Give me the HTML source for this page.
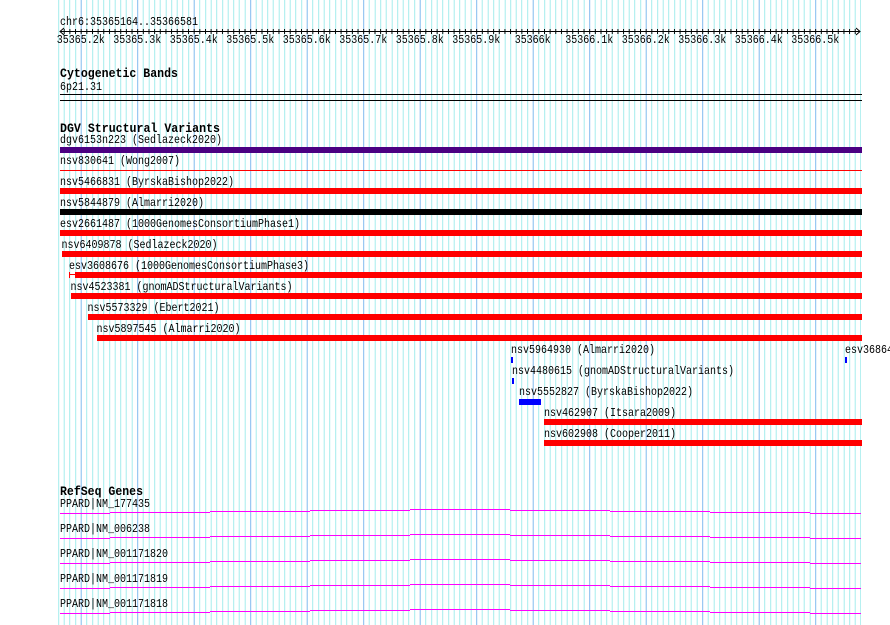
<!DOCTYPE html>
<html><head><meta charset="utf-8"><style>
html,body{margin:0;padding:0;background:#fff;}
svg{display:block}
text{font-family:"Liberation Mono",monospace;font-size:12px;fill:#000}
.b{font-weight:bold;font-size:13px}
</style></head><body>
<svg width="890" height="625" viewBox="0 0 890 625" xmlns="http://www.w3.org/2000/svg">
<defs>
<pattern id="g" x="24.2" y="0" width="56.5" height="625" patternUnits="userSpaceOnUse">
<g shape-rendering="crispEdges">
<rect x="0" y="0" width="1" height="625" fill="#80bbee"/>
<rect x="5.65" y="0" width="1" height="625" fill="#a4ecec"/>
<rect x="11.3" y="0" width="1" height="625" fill="#a4ecec"/>
<rect x="16.95" y="0" width="1" height="625" fill="#a4ecec"/>
<rect x="22.6" y="0" width="1" height="625" fill="#a4ecec"/>
<rect x="28.25" y="0" width="1" height="625" fill="#a4ecec"/>
<rect x="33.9" y="0" width="1" height="625" fill="#a4ecec"/>
<rect x="39.55" y="0" width="1" height="625" fill="#a4ecec"/>
<rect x="45.2" y="0" width="1" height="625" fill="#a4ecec"/>
<rect x="50.85" y="0" width="1" height="625" fill="#a4ecec"/>
</g>
</pattern>
<pattern id="t" x="24.2" y="0" width="5.65" height="10" patternUnits="userSpaceOnUse">
<rect x="0" y="0" width="1" height="10" fill="#000" shape-rendering="crispEdges"/>
</pattern>
</defs>
<rect x="58" y="0" width="803" height="625" fill="url(#g)"/>

<!-- ruler -->
<text x="60" y="25" textLength="138" lengthAdjust="spacingAndGlyphs">chr6:35365164..35366581</text>
<rect x="60" y="31" width="800" height="1" fill="#000"/>
<rect x="62" y="29" width="796" height="5" fill="url(#t)"/>
<path d="M64 28 L60 31.5 L64 35 M856 28 L860 31.5 L856 35" stroke="#000" fill="none" stroke-width="1"/>
<g text-anchor="middle">
<text x="80.7" y="43" textLength="48" lengthAdjust="spacingAndGlyphs">35365.2k</text>
<text x="137.2" y="43" textLength="48" lengthAdjust="spacingAndGlyphs">35365.3k</text>
<text x="193.7" y="43" textLength="48" lengthAdjust="spacingAndGlyphs">35365.4k</text>
<text x="250.2" y="43" textLength="48" lengthAdjust="spacingAndGlyphs">35365.5k</text>
<text x="306.7" y="43" textLength="48" lengthAdjust="spacingAndGlyphs">35365.6k</text>
<text x="363.2" y="43" textLength="48" lengthAdjust="spacingAndGlyphs">35365.7k</text>
<text x="419.7" y="43" textLength="48" lengthAdjust="spacingAndGlyphs">35365.8k</text>
<text x="476.2" y="43" textLength="48" lengthAdjust="spacingAndGlyphs">35365.9k</text>
<text x="532.7" y="43" textLength="36" lengthAdjust="spacingAndGlyphs">35366k</text>
<text x="589.2" y="43" textLength="48" lengthAdjust="spacingAndGlyphs">35366.1k</text>
<text x="645.7" y="43" textLength="48" lengthAdjust="spacingAndGlyphs">35366.2k</text>
<text x="702.2" y="43" textLength="48" lengthAdjust="spacingAndGlyphs">35366.3k</text>
<text x="758.7" y="43" textLength="48" lengthAdjust="spacingAndGlyphs">35366.4k</text>
<text x="815.2" y="43" textLength="48" lengthAdjust="spacingAndGlyphs">35366.5k</text>
</g>

<!-- cyto -->
<text class="b" x="60" y="77" textLength="118" lengthAdjust="spacingAndGlyphs">Cytogenetic Bands</text>
<text x="60" y="90" textLength="42" lengthAdjust="spacingAndGlyphs">6p21.31</text>
<rect x="60" y="94" width="802" height="1" fill="#000"/>
<rect x="60" y="100" width="802" height="1" fill="#000"/>

<!-- DGV -->
<text class="b" x="60" y="132" textLength="160" lengthAdjust="spacingAndGlyphs">DGV Structural Variants</text>
<text x="60" y="143" textLength="162" lengthAdjust="spacingAndGlyphs">dgv6153n223 (Sedlazeck2020)</text>
<rect x="60" y="147" width="802" height="6" fill="#4b0082"/>
<text x="60" y="164" textLength="120" lengthAdjust="spacingAndGlyphs">nsv830641 (Wong2007)</text>
<rect x="60" y="170" width="802" height="1" fill="#f00"/>
<text x="60" y="185" textLength="174" lengthAdjust="spacingAndGlyphs">nsv5466831 (ByrskaBishop2022)</text>
<rect x="60" y="188" width="802" height="6" fill="#f00"/>
<text x="60" y="206" textLength="144" lengthAdjust="spacingAndGlyphs">nsv5844879 (Almarri2020)</text>
<rect x="60" y="209" width="802" height="6" fill="#000"/>
<text x="60" y="227" textLength="240" lengthAdjust="spacingAndGlyphs">esv2661487 (1000GenomesConsortiumPhase1)</text>
<rect x="60" y="230" width="802" height="6" fill="#f00"/>
<text x="61.5" y="248" textLength="156" lengthAdjust="spacingAndGlyphs">nsv6409878 (Sedlazeck2020)</text>
<rect x="62" y="251" width="800" height="6" fill="#f00"/>
<text x="69" y="269" textLength="240" lengthAdjust="spacingAndGlyphs">esv3608676 (1000GenomesConsortiumPhase3)</text>
<rect x="69" y="272" width="1" height="6" fill="#f00"/>
<rect x="69" y="274" width="6" height="1" fill="#f00"/>
<rect x="75" y="272" width="787" height="6" fill="#f00"/>
<text x="70.5" y="290" textLength="222" lengthAdjust="spacingAndGlyphs">nsv4523381 (gnomADStructuralVariants)</text>
<rect x="71" y="293" width="791" height="6" fill="#f00"/>
<text x="87.5" y="311" textLength="132" lengthAdjust="spacingAndGlyphs">nsv5573329 (Ebert2021)</text>
<rect x="88" y="314" width="774" height="6" fill="#f00"/>
<text x="96.5" y="332" textLength="144" lengthAdjust="spacingAndGlyphs">nsv5897545 (Almarri2020)</text>
<rect x="97" y="335" width="765" height="6" fill="#f00"/>
<text x="511" y="353" textLength="144" lengthAdjust="spacingAndGlyphs">nsv5964930 (Almarri2020)</text>
<rect x="511" y="357" width="2" height="6" fill="#00f"/>
<text x="845" y="353" textLength="48" lengthAdjust="spacingAndGlyphs">esv36864</text>
<rect x="845" y="357" width="2" height="6" fill="#00f"/>
<text x="512" y="374" textLength="222" lengthAdjust="spacingAndGlyphs">nsv4480615 (gnomADStructuralVariants)</text>
<rect x="512" y="378" width="2" height="6" fill="#00f"/>
<text x="519" y="395" textLength="174" lengthAdjust="spacingAndGlyphs">nsv5552827 (ByrskaBishop2022)</text>
<rect x="519" y="399" width="22" height="6" fill="#00f"/>
<text x="544" y="416" textLength="132" lengthAdjust="spacingAndGlyphs">nsv462907 (Itsara2009)</text>
<rect x="544" y="419" width="318" height="6" fill="#f00"/>
<text x="544" y="437" textLength="132" lengthAdjust="spacingAndGlyphs">nsv602908 (Cooper2011)</text>
<rect x="544" y="440" width="318" height="6" fill="#f00"/>

<!-- RefSeq -->
<text class="b" x="60" y="495" textLength="83" lengthAdjust="spacingAndGlyphs">RefSeq Genes</text>
<g id="gl" fill="#f0f" shape-rendering="crispEdges">
<rect x="60" y="513" width="50" height="1"/>
<rect x="110" y="512" width="100" height="1"/>
<rect x="210" y="511" width="100" height="1"/>
<rect x="310" y="510" width="100" height="1"/>
<rect x="410" y="509" width="100" height="1"/>
<rect x="510" y="510" width="100" height="1"/>
<rect x="610" y="511" width="100" height="1"/>
<rect x="710" y="512" width="100" height="1"/>
<rect x="810" y="513" width="51" height="1"/>
</g>
<use href="#gl" y="25"/>
<use href="#gl" y="50"/>
<use href="#gl" y="75"/>
<use href="#gl" y="100"/>
<text x="60" y="507" textLength="90" lengthAdjust="spacingAndGlyphs">PPARD|NM_177435</text>
<text x="60" y="532" textLength="90" lengthAdjust="spacingAndGlyphs">PPARD|NM_006238</text>
<text x="60" y="557" textLength="108" lengthAdjust="spacingAndGlyphs">PPARD|NM_001171820</text>
<text x="60" y="582" textLength="108" lengthAdjust="spacingAndGlyphs">PPARD|NM_001171819</text>
<text x="60" y="607" textLength="108" lengthAdjust="spacingAndGlyphs">PPARD|NM_001171818</text>
</svg>
</body></html>
